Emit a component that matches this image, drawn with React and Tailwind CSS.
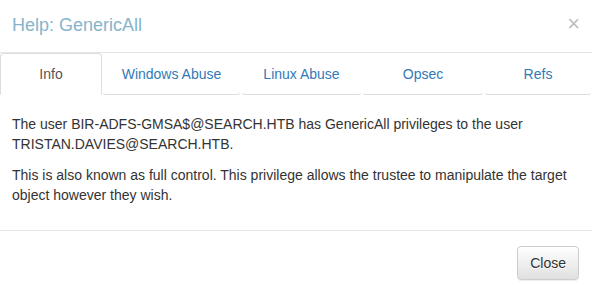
import React from "react";

const tabs = [
  { label: "Info", width: "w-[102px]", active: true },
  { label: "Windows Abuse", width: "w-[139px]" },
  { label: "Linux Abuse", width: "w-[121px]" },
  { label: "Opsec", width: "w-[122px]" },
  { label: "Refs", width: "flex-1" },
];

const HelpModal = () => {
  return (
    <div className="w-[592px] h-[290px] overflow-hidden bg-white font-['Liberation_Sans',Arial,sans-serif] text-[14px] text-[#333]">
      <div className="flex h-[53px] items-start justify-between border-b border-[#e5e5e5] pl-3 pr-3 pt-3">
        <h4 className="text-[18px] leading-[26px] text-[#86b4cb]">Help: GenericAll</h4>
        <button className="mt-[1px] text-[22px] font-normal leading-[21px] text-[#bdbdbd]">
          ×
        </button>
      </div>

      <div className="flex">
        {tabs.map((tab) => (
          <div
            key={tab.label}
            className={
              tab.active
                ? `${tab.width} h-[42px] rounded-t-[4px] border border-[#ddd] border-b-transparent py-[10px] text-center leading-[20px] text-[#555]`
                : `${tab.width} h-[42px] rounded-[4px] border border-transparent border-b-[#ddd] py-[10px] text-center leading-[20px] text-[#337ab7]`
            }
          >
            {tab.label}
          </div>
        ))}
      </div>

      <div className="px-3 pt-[19px] pb-[15px] leading-[20px]">
        <p className="mb-[11px]">
          The user BIR-ADFS-GMSA$@SEARCH.HTB has GenericAll privileges to the user
          TRISTAN.DAVIES@SEARCH.HTB.
        </p>
        <p className="mb-[10px]">
          This is also known as full control. This privilege allows the trustee to
          manipulate the target object however they wish.
        </p>
      </div>

      <div className="flex justify-end border-t border-[#e5e5e5] pt-[15px] pr-[13px]">
        <button className="h-[34px] rounded-[4px] border border-[#ccc] bg-gradient-to-b from-white to-[#e0e0e0] px-3 leading-[20px] text-[#333] shadow-[0_1px_1px_rgba(0,0,0,0.075)] [text-shadow:0_1px_0_#fff]">
          Close
        </button>
      </div>
    </div>
  );
};

export default function App() {
  return <HelpModal />;
}
